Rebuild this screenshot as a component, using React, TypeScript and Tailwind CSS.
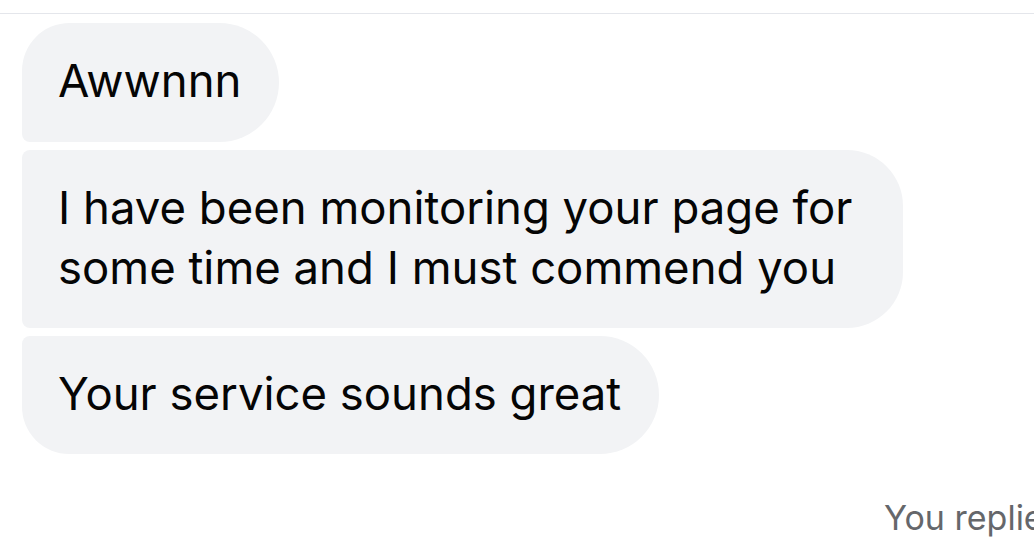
export default function App() {
    return (
        <div className="w-[1034px] h-[556px] overflow-hidden bg-white" style={{ fontFamily: "Inter, 'Noto Sans', sans-serif" }}>
            <div className="h-[14px] border-b border-[#e4e6eb]" />

            {/* messages */}
            <div className="flex flex-col items-start gap-2 pl-[22px] pt-[9px]">
                <div className="bg-[#f2f3f5] text-[#050505] text-[45.5px] leading-[60px] pl-[36px] pr-[38px] pt-[28px] pb-[31px] rounded-tl-[48px] rounded-bl-[8px] rounded-r-[60px]">
                    Awwnnn
                </div>
                <div className="bg-[#f2f3f5] text-[#050505] text-[45.5px] leading-[60px] pl-[36px] pr-[38px] pt-[28px] pb-[30px] rounded-l-[8px] rounded-r-[56px] w-[881px]">
                    I have been monitoring your page for some time and I must commend you
                </div>
                <div className="bg-[#f2f3f5] text-[#050505] text-[45.5px] leading-[60px] pl-[36px] pr-[38px] pt-[28px] pb-[30px] rounded-tl-[8px] rounded-bl-[48px] rounded-r-[60px]">
                    Your service sounds great
                </div>
            </div>

            <div className="mt-[44px] whitespace-nowrap pl-[884px] text-[34px] leading-[40px] text-[#65676b]">
                You replied
            </div>
        </div>
    );
}
